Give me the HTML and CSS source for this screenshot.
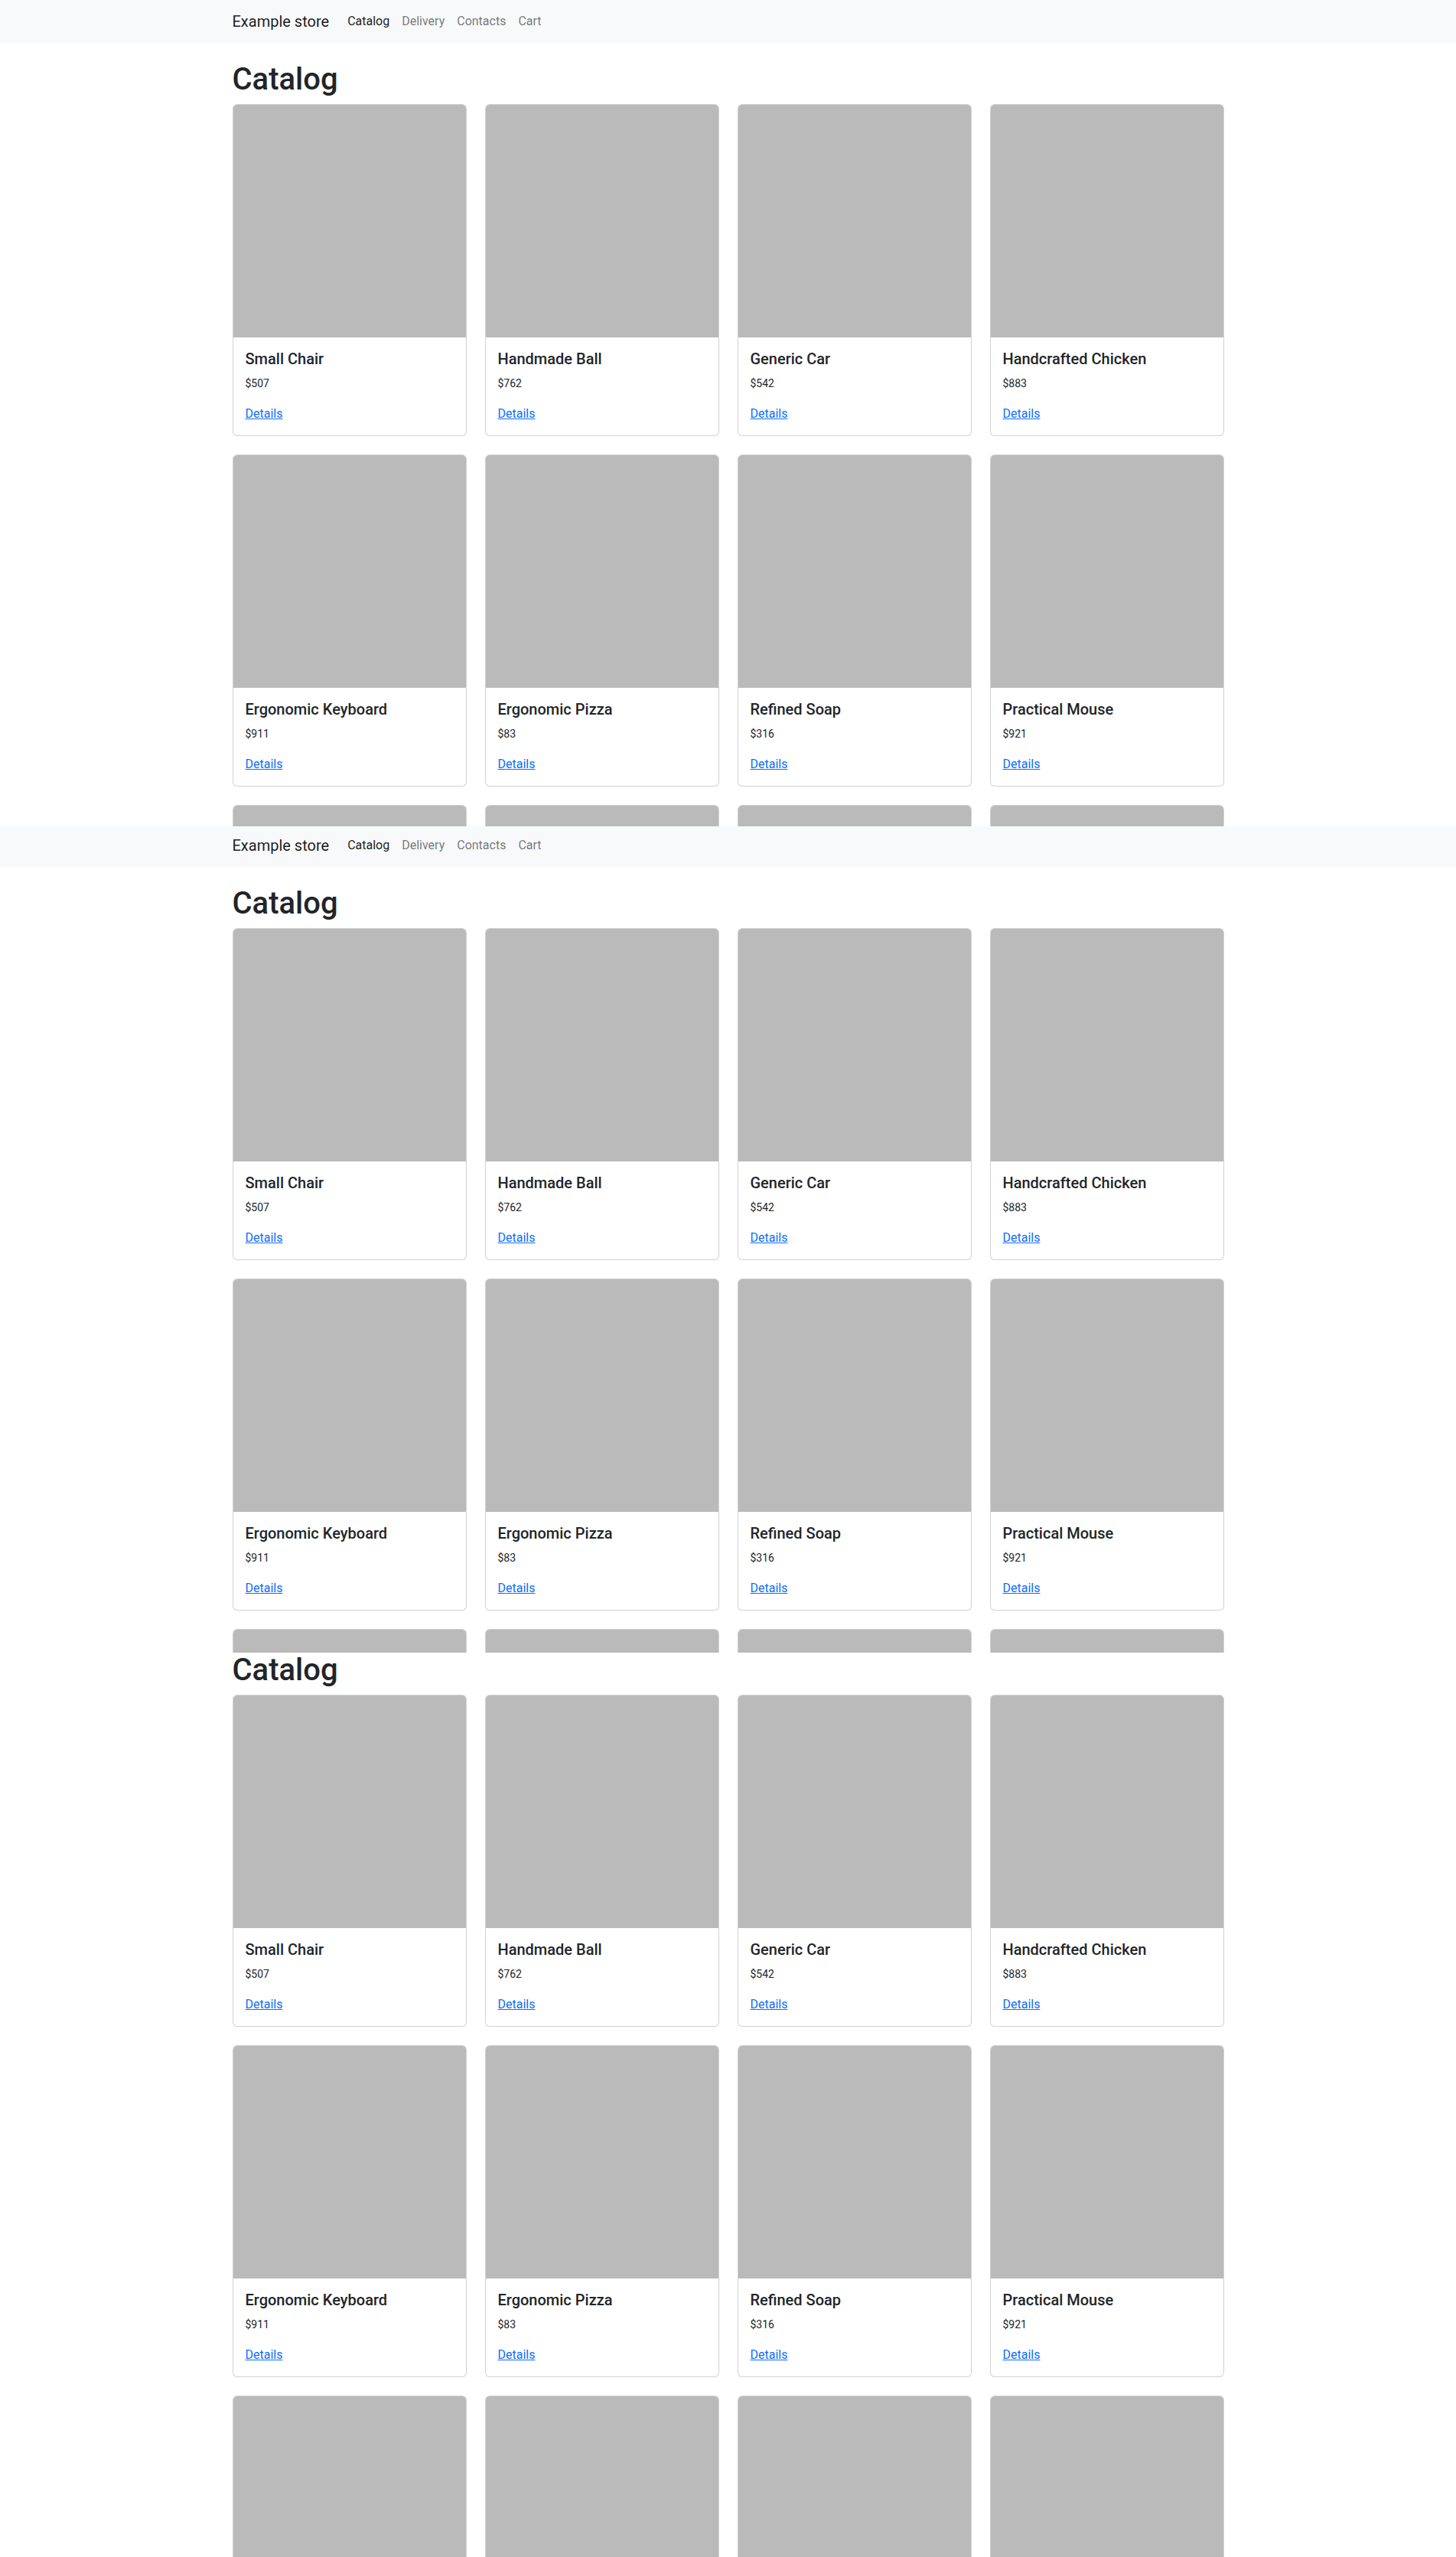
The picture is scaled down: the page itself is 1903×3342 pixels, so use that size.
FILE: index.html
```html
<!DOCTYPE html>
<html lang="en">
<head>
<meta charset="utf-8">
<title>Example store</title>
<link rel="stylesheet" href="styles.css">
</head>
<body>
<div class="frame frame-first">
  <div class="page">
    <nav class="navbar"><div class="container nav-inner"><a class="brand" href="#">Example store</a><ul class="nav"><li><a class="nav-link active" href="#">Catalog</a></li><li><a class="nav-link" href="#">Delivery</a></li><li><a class="nav-link" href="#">Contacts</a></li><li><a class="nav-link" href="#">Cart</a></li></ul></div></nav>
    <main class="container main">
      <h1 class="title">Catalog</h1>
      <div class="grid">
        <div class="card"><div class="card-img"></div><div class="card-body"><h5 class="card-title">Small Chair</h5><p class="card-text"><small>$507</small></p><a class="link" href="#">Details</a></div></div>
        <div class="card"><div class="card-img"></div><div class="card-body"><h5 class="card-title">Handmade Ball</h5><p class="card-text"><small>$762</small></p><a class="link" href="#">Details</a></div></div>
        <div class="card"><div class="card-img"></div><div class="card-body"><h5 class="card-title">Generic Car</h5><p class="card-text"><small>$542</small></p><a class="link" href="#">Details</a></div></div>
        <div class="card"><div class="card-img"></div><div class="card-body"><h5 class="card-title">Handcrafted Chicken</h5><p class="card-text"><small>$883</small></p><a class="link" href="#">Details</a></div></div>
        <div class="card"><div class="card-img"></div><div class="card-body"><h5 class="card-title">Ergonomic Keyboard</h5><p class="card-text"><small>$911</small></p><a class="link" href="#">Details</a></div></div>
        <div class="card"><div class="card-img"></div><div class="card-body"><h5 class="card-title">Ergonomic Pizza</h5><p class="card-text"><small>$83</small></p><a class="link" href="#">Details</a></div></div>
        <div class="card"><div class="card-img"></div><div class="card-body"><h5 class="card-title">Refined Soap</h5><p class="card-text"><small>$316</small></p><a class="link" href="#">Details</a></div></div>
        <div class="card"><div class="card-img"></div><div class="card-body"><h5 class="card-title">Practical Mouse</h5><p class="card-text"><small>$921</small></p><a class="link" href="#">Details</a></div></div>
        <div class="card"><div class="card-img"></div></div>
        <div class="card"><div class="card-img"></div></div>
        <div class="card"><div class="card-img"></div></div>
        <div class="card"><div class="card-img"></div></div>
      </div>
    </main>
  </div>
</div>
<div class="frame frame-second">
  <div class="page shift-nav">
    <nav class="navbar"><div class="container nav-inner"><a class="brand" href="#">Example store</a><ul class="nav"><li><a class="nav-link active" href="#">Catalog</a></li><li><a class="nav-link" href="#">Delivery</a></li><li><a class="nav-link" href="#">Contacts</a></li><li><a class="nav-link" href="#">Cart</a></li></ul></div></nav>
    <main class="container main">
      <h1 class="title">Catalog</h1>
      <div class="grid">
        <div class="card"><div class="card-img"></div><div class="card-body"><h5 class="card-title">Small Chair</h5><p class="card-text"><small>$507</small></p><a class="link" href="#">Details</a></div></div>
        <div class="card"><div class="card-img"></div><div class="card-body"><h5 class="card-title">Handmade Ball</h5><p class="card-text"><small>$762</small></p><a class="link" href="#">Details</a></div></div>
        <div class="card"><div class="card-img"></div><div class="card-body"><h5 class="card-title">Generic Car</h5><p class="card-text"><small>$542</small></p><a class="link" href="#">Details</a></div></div>
        <div class="card"><div class="card-img"></div><div class="card-body"><h5 class="card-title">Handcrafted Chicken</h5><p class="card-text"><small>$883</small></p><a class="link" href="#">Details</a></div></div>
        <div class="card"><div class="card-img"></div><div class="card-body"><h5 class="card-title">Ergonomic Keyboard</h5><p class="card-text"><small>$911</small></p><a class="link" href="#">Details</a></div></div>
        <div class="card"><div class="card-img"></div><div class="card-body"><h5 class="card-title">Ergonomic Pizza</h5><p class="card-text"><small>$83</small></p><a class="link" href="#">Details</a></div></div>
        <div class="card"><div class="card-img"></div><div class="card-body"><h5 class="card-title">Refined Soap</h5><p class="card-text"><small>$316</small></p><a class="link" href="#">Details</a></div></div>
        <div class="card"><div class="card-img"></div><div class="card-body"><h5 class="card-title">Practical Mouse</h5><p class="card-text"><small>$921</small></p><a class="link" href="#">Details</a></div></div>
        <div class="card"><div class="card-img"></div></div>
        <div class="card"><div class="card-img"></div></div>
        <div class="card"><div class="card-img"></div></div>
        <div class="card"><div class="card-img"></div></div>
      </div>
    </main>
  </div>
</div>
<div class="frame frame-third">
  <div class="page shift-title">
    <main class="container main">
      <h1 class="title">Catalog</h1>
      <div class="grid">
        <div class="card"><div class="card-img"></div><div class="card-body"><h5 class="card-title">Small Chair</h5><p class="card-text"><small>$507</small></p><a class="link" href="#">Details</a></div></div>
        <div class="card"><div class="card-img"></div><div class="card-body"><h5 class="card-title">Handmade Ball</h5><p class="card-text"><small>$762</small></p><a class="link" href="#">Details</a></div></div>
        <div class="card"><div class="card-img"></div><div class="card-body"><h5 class="card-title">Generic Car</h5><p class="card-text"><small>$542</small></p><a class="link" href="#">Details</a></div></div>
        <div class="card"><div class="card-img"></div><div class="card-body"><h5 class="card-title">Handcrafted Chicken</h5><p class="card-text"><small>$883</small></p><a class="link" href="#">Details</a></div></div>
        <div class="card"><div class="card-img"></div><div class="card-body"><h5 class="card-title">Ergonomic Keyboard</h5><p class="card-text"><small>$911</small></p><a class="link" href="#">Details</a></div></div>
        <div class="card"><div class="card-img"></div><div class="card-body"><h5 class="card-title">Ergonomic Pizza</h5><p class="card-text"><small>$83</small></p><a class="link" href="#">Details</a></div></div>
        <div class="card"><div class="card-img"></div><div class="card-body"><h5 class="card-title">Refined Soap</h5><p class="card-text"><small>$316</small></p><a class="link" href="#">Details</a></div></div>
        <div class="card"><div class="card-img"></div><div class="card-body"><h5 class="card-title">Practical Mouse</h5><p class="card-text"><small>$921</small></p><a class="link" href="#">Details</a></div></div>
        <div class="card"><div class="card-img"></div></div>
        <div class="card"><div class="card-img"></div></div>
        <div class="card"><div class="card-img"></div></div>
        <div class="card"><div class="card-img"></div></div>
      </div>
    </main>
  </div>
</div>
</body>
</html>
```

FILE: styles.css
```css
* { box-sizing: border-box; }
html, body { margin: 0; padding: 0; }
body {
  font-family: Roboto, "Noto Sans", "Liberation Sans", sans-serif;
  font-size: 16px;
  line-height: 1.5;
  color: #212529;
  background: #fff;
}
.frame { overflow: hidden; }
.frame-first { height: 1080px; }
.frame-second { height: 1080px; }
.frame-third { height: 1182px; }
.shift-nav { margin-top: -3px; }
.shift-title { margin-top: -25px; }

.container {
  max-width: 1320px;
  margin: 0 auto;
  padding: 0 12px;
}
.navbar {
  background: #f8f9fa;
  padding: 8px 0;
}
.nav-inner { display: flex; align-items: center; }
.brand {
  font-size: 20px;
  line-height: 30px;
  padding: 5px 0;
  margin-right: 16px;
  color: rgba(0, 0, 0, 0.9);
  text-decoration: none;
}
.nav { display: flex; list-style: none; margin: 0; padding: 0; }
.nav-link {
  display: block;
  padding: 8px;
  line-height: 24px;
  color: rgba(0, 0, 0, 0.55);
  text-decoration: none;
}
.nav-link.active { color: rgba(0, 0, 0, 0.9); }

.main { padding-top: 24px; }
.title {
  font-size: 40px;
  font-weight: 500;
  line-height: 1.2;
  margin: 0 0 8px;
}
.grid {
  display: grid;
  grid-template-columns: repeat(4, 1fr);
  gap: 24px;
}
.card {
  background: #fff;
  border: 1px solid rgba(0, 0, 0, 0.175);
  border-radius: 6px;
  overflow: hidden;
}
.card-img {
  aspect-ratio: 1 / 1;
  background: #bababa;
}
.card-body { padding: 16px; }
.card-title {
  font-size: 20px;
  font-weight: 500;
  line-height: 1.2;
  margin: 0 0 8px;
}
.card-text { margin: 0 0 16px; }
.card-text small { font-size: 14px; }
.link { color: #0d6efd; text-decoration: underline; }
```
